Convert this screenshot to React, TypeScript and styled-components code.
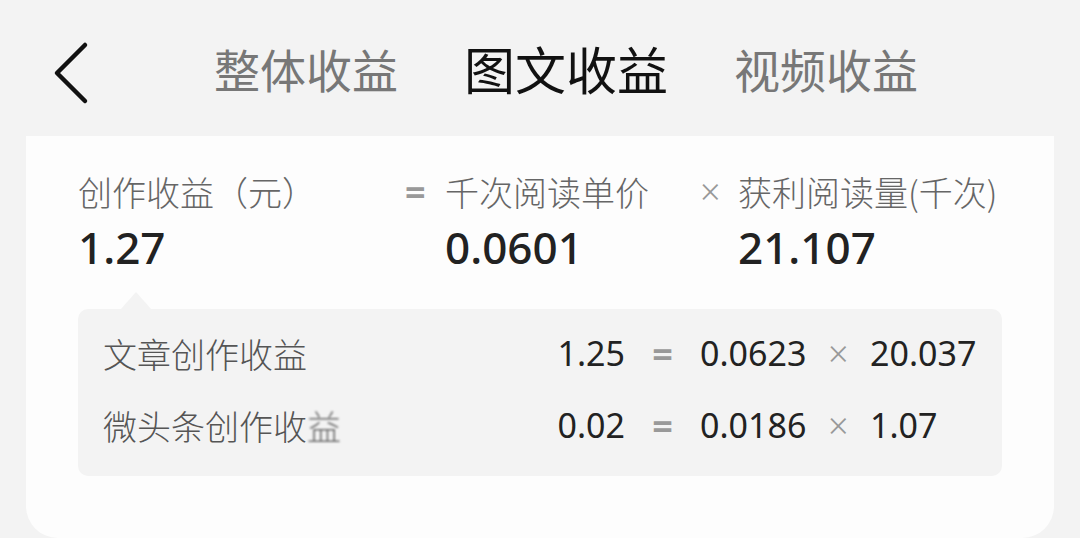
import React from 'react';
import styled, { createGlobalStyle } from 'styled-components';

const GlobalStyle = createGlobalStyle`
  html, body {
    margin: 0;
    padding: 0;
    background: #f3f3f3;
  }
  body {
    font-family: "Noto Sans", "Noto Sans CJK SC", sans-serif;
    overflow: hidden;
  }
`;

const Page = styled.div`
  width: 1080px;
  height: 538px;
  background: #f3f3f3;
  display: flex;
  flex-direction: column;
  overflow: hidden;
`;

const Header = styled.div`
  height: 136px;
  display: flex;
  align-items: center;
  padding-left: 50px;
  flex-shrink: 0;
`;

const BackButton = styled.button`
  background: none;
  border: none;
  padding: 0;
  margin-top: 9px;
  width: 42px;
  height: 68px;
  display: flex;
  cursor: pointer;
`;

const Tabs = styled.div`
  display: flex;
  align-items: center;
  gap: 66px;
  margin-left: 122px;
`;

const Tab = styled.div<{ $active?: boolean }>`
  font-family: "Noto Sans CJK SC", sans-serif;
  font-size: ${(p) => (p.$active ? '51px' : '46px')};
  font-weight: 400;
  color: ${(p) => (p.$active ? '#111' : '#777')};
  line-height: 1;
`;

const Card = styled.div`
  margin: 0 26px;
  flex: 1;
  background: #fdfdfd;
  border-radius: 0 0 32px 32px;
  padding: 34px 52px 0;
`;

const Summary = styled.div`
  display: grid;
  grid-template-columns: 327px 295px 1fr;
`;

const SummaryCol = styled.div`
  display: flex;
  flex-direction: column;
  gap: 9px;
`;

const LabelRow = styled.div`
  display: flex;
  align-items: center;
  font-family: "Noto Sans CJK SC", sans-serif;
  font-size: 34px;
  font-weight: 300;
  line-height: 43px;
  color: #666;
`;

const Sign = styled.span<{ $w?: number; $bold?: boolean }>`
  display: inline-block;
  width: ${(p) => p.$w ?? 40}px;
  color: #999;
  font-family: "Noto Sans", sans-serif;
  font-size: 36px;
  font-weight: ${(p) => (p.$bold ? 700 : 300)};
`;

const BigValue = styled.div<{ $indent?: number }>`
  font-family: "Noto Sans", sans-serif;
  font-size: 44px;
  font-weight: 500;
  line-height: 50px;
  color: #222;
  padding-left: ${(p) => p.$indent ?? 0}px;
`;

const Detail = styled.div`
  position: relative;
  margin-top: 37px;
  background: #f3f3f3;
  border-radius: 10px;
  padding: 8px 26px 15px 25px;
`;

const Pointer = styled.div`
  position: absolute;
  top: -17px;
  left: 42px;
  width: 0;
  height: 0;
  border-left: 16px solid transparent;
  border-right: 16px solid transparent;
  border-bottom: 18px solid #f3f3f3;
`;

const DetailRow = styled.div`
  display: grid;
  grid-template-columns: 1fr 100px 75px 128px 42px 106px;
  align-items: center;
  height: 72px;
`;

const RowLabel = styled.div`
  font-family: "Noto Sans CJK SC", sans-serif;
  font-size: 34px;
  font-weight: 300;
  color: #555;
  white-space: nowrap;
`;

const Faded = styled.span`
  filter: blur(1.2px);
  color: #6a6a6a;
`;

const Num = styled.div<{ $align?: string }>`
  font-family: "Noto Sans", sans-serif;
  font-size: 34px;
  color: #222;
  text-align: ${(p) => p.$align ?? 'left'};
`;

const Op = styled.div<{ $align?: string; $bold?: boolean }>`
  font-family: "Noto Sans", sans-serif;
  font-size: 36px;
  font-weight: ${(p) => (p.$bold ? 700 : 300)};
  color: #999;
  text-align: ${(p) => p.$align ?? 'left'};
`;

const rows = [
  { label: '文章创作收益', fade: '', total: '1.25', price: '0.0623', reads: '20.037' },
  { label: '微头条创作收', fade: '益', total: '0.02', price: '0.0186', reads: '1.07' },
];

const App: React.FC = () => {
  return (
    <Page>
      <GlobalStyle />
      <Header>
        <BackButton>
          <svg width="42" height="68" viewBox="0 0 42 68">
            <path
              d="M35 6 L7 34 L35 62"
              fill="none"
              stroke="#111"
              strokeWidth="4.5"
              strokeLinecap="round"
              strokeLinejoin="round"
            />
          </svg>
        </BackButton>
        <Tabs>
          <Tab>整体收益</Tab>
          <Tab $active>图文收益</Tab>
          <Tab>视频收益</Tab>
        </Tabs>
      </Header>

      <Card>
        <Summary>
          <SummaryCol>
            <LabelRow>创作收益（元）</LabelRow>
            <BigValue>1.27</BigValue>
          </SummaryCol>
          <SummaryCol>
            <LabelRow>
              <Sign $bold>=</Sign>千次阅读单价
            </LabelRow>
            <BigValue $indent={40}>0.0601</BigValue>
          </SummaryCol>
          <SummaryCol>
            <LabelRow>
              <Sign $w={38}>×</Sign>获利阅读量(千次)
            </LabelRow>
            <BigValue $indent={38}>21.107</BigValue>
          </SummaryCol>
        </Summary>

        <Detail>
          <Pointer />
          {rows.map((r) => (
            <DetailRow key={r.label}>
              <RowLabel>
                {r.label}
                {r.fade && <Faded>{r.fade}</Faded>}
              </RowLabel>
              <Num $align="right">{r.total}</Num>
              <Op $align="center" $bold>=</Op>
              <Num>{r.price}</Num>
              <Op>×</Op>
              <Num>{r.reads}</Num>
            </DetailRow>
          ))}
        </Detail>
      </Card>
    </Page>
  );
};

export default App;
